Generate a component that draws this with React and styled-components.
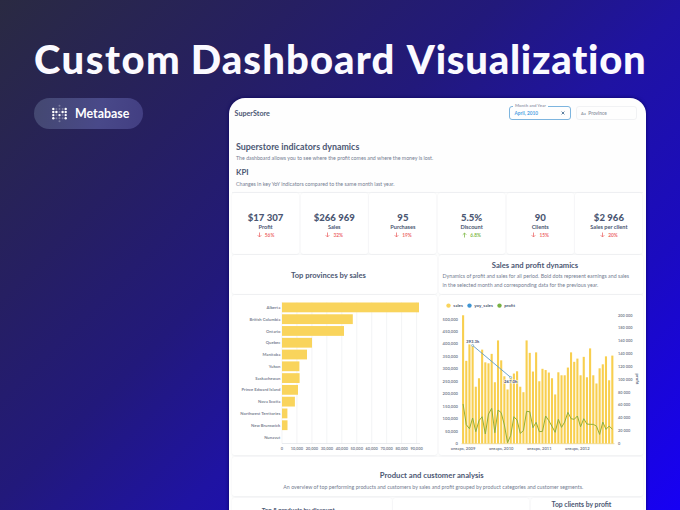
import React from 'react';
import styled, { createGlobalStyle } from 'styled-components';

const Global = createGlobalStyle`
  * { box-sizing: border-box; }
  body { margin: 0; font-family: Lato, "Open Sans", sans-serif; overflow: hidden; }
`;

const ink = '#4c5773';
const muted = '#747d91';

const Page = styled.div`
  width: 680px;
  height: 510px;
  overflow: hidden;
  background: linear-gradient(135deg, #2a2a42 0%, #261f62 25%, #22197b 42%, #1f13a2 58%, #1b0bc0 77%, #1700f4 100%);
`;
const Title = styled.h1`
  margin: 0;
  padding: 34px 0 0 34px;
  height: 97.5px;
  font-size: 40px;
  line-height: 50px;
  font-weight: 900;
  white-space: nowrap;
  color: #fbfaff;
`;
const Word = styled.span`
  letter-spacing: ${(p) => p.$track}px;
  margin-right: ${(p) => p.$after || 0}px;
`;
const Columns = styled.div`
  display: flex;
  padding-left: 34px;
`;
const Side = styled.div`
  width: 195px;
  padding-top: 0.5px;
`;
const Pill = styled.div`
  display: flex;
  align-items: center;
  gap: 7px;
  width: 109px;
  height: 31px;
  padding-left: 17px;
  border-radius: 16px;
  background: linear-gradient(100deg, #444870, #494989 60%, #423e82);
  color: #fff;
  font-size: 12.4px;
  font-weight: 700;
`;
const Board = styled.main`
  width: 417px;
  height: 413px;
  padding: 0 3.5px 0 3px;
  border-radius: 16px 16px 0 0;
  background: #fefefe;
  box-shadow: 0 0 3px 1px rgba(8, 0, 90, 0.55);
  overflow: hidden;
  color: ${ink};
`;
const TopBar = styled.header`
  display: flex;
  justify-content: space-between;
  height: 38.5px;
  padding: 8.5px 6px 0 2.6px;
`;
const Brand = styled.div`
  padding-top: 0.5px;
  font-size: 7.15px;
  line-height: 14px;
  font-weight: 700;
`;
const Filters = styled.div`
  display: flex;
  gap: 5px;
`;
const Field = styled.div`
  position: relative;
  display: flex;
  align-items: center;
  justify-content: ${(p) => (p.$active ? 'space-between' : 'flex-start')};
  gap: 2.5px;
  width: ${(p) => (p.$active ? 61.5 : 61)}px;
  height: 14px;
  padding: 0 5px 0 4.5px;
  border: 1px solid ${(p) => (p.$active ? '#7db5df' : '#f1f2f4')};
  border-radius: 3px;
  font-size: 4.75px;
  font-weight: 700;
  color: ${(p) => (p.$active ? '#509ee3' : '#9299a6')};
`;
const FieldLabel = styled.span`
  position: absolute;
  top: -4px;
  left: 3px;
  padding: 0 2px;
  background: #fefefe;
  font-size: 4.4px;
  line-height: 6px;
  color: #9aa1af;
  font-weight: 700;
  white-space: nowrap;
`;
const Abbr = styled.span`
  font-size: 4px;
`;
const Intro = styled.section`
  height: 57px;
  padding: 4px 4px 0;
  border-bottom: 1px solid #f2f3f5;
`;
const Heading = styled.h2`
  margin: 0;
  padding-right: ${(p) => p.$inset || 0}px;
  font-size: ${(p) => p.$size}px;
  line-height: 13px;
  font-weight: 700;
  white-space: nowrap;
`;
const Note = styled.p`
  margin: 0;
  padding-right: ${(p) => p.$inset || 0}px;
  font-size: 5.28px;
  line-height: ${(p) => p.$line || 10}px;
  color: ${muted};
  white-space: nowrap;
`;
const Group = styled.div`
  margin-top: 2.5px;
`;
const Grid = styled.div`
  display: grid;
  grid-template-columns: ${(p) => p.$cols};
  gap: 1.5px;
  margin-bottom: 1.5px;
`;
const Card = styled.section`
  display: flex;
  flex-direction: column;
  align-items: center;
  height: ${(p) => p.$h}px;
  padding-top: ${(p) => p.$top || 0}px;
  background: #fff;
  border-radius: 2.5px;
  box-shadow: 0 0.5px 2px rgba(70, 80, 100, 0.08);
`;
const Value = styled.div`
  font-size: 9.6px;
  line-height: 11px;
  font-weight: 900;
  white-space: nowrap;
`;
const Label = styled.div`
  font-size: 5.6px;
  line-height: 8px;
  font-weight: 700;
`;
const Trend = styled.div`
  display: flex;
  align-items: center;
  gap: 3px;
  height: 9px;
  font-size: 4.8px;
  font-weight: 700;
  color: ${(p) => (p.$up ? '#84bb4c' : '#ed6e6e')};
`;
const LeftText = styled.div`
  align-self: stretch;
  padding-left: 4px;
`;
const ChartSvg = styled.svg`
  display: block;
  align-self: stretch;
  font-family: Lato, "Open Sans", sans-serif;
  font-weight: 700;
  fill: #7d8594;
`;

const kpis = [
  ['$17 307', 'Profit', '56%'],
  ['$266 969', 'Sales', '32%'],
  ['95', 'Purchases', '19%'],
  ['5.5%', 'Discount', '6.8%', true],
  ['90', 'Clients', '15%'],
  ['$2 966', 'Sales per client', '20%'],
];

const provinces = [
  ['Alberta', 137],
  ['British Columbia', 70.8],
  ['Ontario', 62],
  ['Quebec', 30],
  ['Manitoba', 25],
  ['Yukon', 17.4],
  ['Saskachewan', 17.6],
  ['Prince Edward Island', 16],
  ['Nova Scotia', 12.9],
  ['Northwest Territories', 5.4],
  ['New Brunswick', 5.5],
  ['Nunavut', 0],
];

/* Monthly values, in thousands */
const sales = [
  515, 332, 398, 394, 228, 262, 377, 326, 322, 360, 246, 414, 334, 270, 217, 265, 281, 290, 228, 206, 414,
  364, 289, 366, 250, 300, 295, 285, 262, 197, 286, 274, 274, 305, 366, 328, 341, 274, 348, 266, 382, 274,
  241, 302, 318, 350, 254, 353,
];
const profit = [
  61.5, 29.3, 23, 39.7, 18.4, 35.5, 41.7, 14.8, 45.9, 54.7, 16.8, 52.1, 48, 28.8, 1.3, 12.7, 41.7, 36.5,
  15.8, 20, 50, 49.5, 24.6, 33, 18.4, 18.9, 42.8, 35.5, 26.7, 17.4, 37.6, 25.1, 33.4, 48.5, 38.6, 37.6,
  42.8, 26.1, 38.6, 30.3, 29.8, 29.8, 27.1, 14.1, 33.4, 22, 27.1, 22.4,
];

function Arrow({ up }) {
  return (
    <svg width="5" height="6" viewBox="0 0 5 6" fill="none" stroke="currentColor" strokeWidth="0.8">
      <path d={up ? 'M2.5 5.5V1M0.7 2.8L2.5 1L4.3 2.8' : 'M2.5 .5V5M0.7 3.2L2.5 5L4.3 3.2'} />
    </svg>
  );
}

function MetabaseMark() {
  const rows = ['..o..', '#.o.#', '##o##', '#o#o#', '#.o.#', '..o..'];
  return (
    <svg width="17" height="19" viewBox="0 0 17 19">
      {rows.map((row, y) =>
        [...row].map((c, x) =>
          c === '.' && (y === 0 || y === 5) ? null : (
            <circle
              key={`${x}-${y}`}
              cx={2.3 + x * 3.1}
              cy={1.8 + y * 3.1}
              r={c === '#' ? 1.2 : 1}
              fill="#fff"
              opacity={c === '#' ? 1 : 0.28}
            />
          )
        )
      )}
    </svg>
  );
}

function ProvinceChart() {
  return (
    <ChartSvg width="205" height="160" viewBox="232 295 205 160" fontSize="4.2">
      {Array.from({ length: 10 }, (_, i) => (
        <g key={i}>
          <path d={`M${282 + i * 14.95} 302V443.5`} stroke="#eeeff1" strokeWidth="0.7" />
          <text x={282 + i * 14.95} y="449.6" textAnchor="middle" fontSize="3.95">
            {i ? `${i}0,000` : '0'}
          </text>
        </g>
      ))}
      <path d="M282 443.5H420" stroke="#dcdfe4" strokeWidth="0.6" />
      {provinces.map(([name, w], i) => (
        <g key={name}>
          <rect x="282" y={302.5 + i * 11.78} width={w} height="9.8" fill="#f9d45c" />
          <text x="280.3" y={309 + i * 11.78} textAnchor="end">
            {name}
          </text>
        </g>
      ))}
    </ChartSvg>
  );
}

function DynamicsChart() {
  const x = (i) => 462.6 + i * 3.175;
  return (
    <ChartSvg width="204" height="160" viewBox="438.5 295 204 160" fontSize="4.15">
      {[['sales', 448, '#f9d45c'], ['yoy_sales', 469, '#3f95d3'], ['profit', 499, '#78b143']].map(([n, cx, c]) => (
        <g key={n}>
          <circle cx={cx} cy="305.6" r="2.2" fill={c} />
          <text x={cx + 4.8} y="307.1" fontSize="4.4" fill={ink}>
            {n}
          </text>
        </g>
      ))}
      {Array.from({ length: 11 }, (_, i) => (
        <g key={i}>
          <text x="457.5" y={445 - i * 12.45} textAnchor="end">
            {i ? `${i * 50},000` : '0'}
          </text>
          <text x="617.5" y={445 - i * 12.85} fontSize="3.9">
            {i ? `${i * 20} 000` : '0'}
          </text>
        </g>
      ))}
      {['2009', '2010', '2011', '2012'].map((year, i) => (
        <text key={year} x={462.6 + i * 38.1} y="449.7" textAnchor="middle">
          {`январь, ${year}`}
        </text>
      ))}
      <text transform="translate(635.2 379) rotate(90)" textAnchor="middle" fontSize="4.4" fill={ink}>
        profit
      </text>
      <path d="M461 443.7H614" stroke="#e3c56c" strokeWidth="0.6" />
      {sales.map((v, i) => (
        <rect key={i} x={x(i) - 1.05} y={443.5 - v * 0.249} width="2.1" height={v * 0.249} fill="#f8cf4f" />
      ))}
      <polyline
        points={profit.map((v, i) => `${x(i)},${443.5 - v * 0.6425}`).join(' ')}
        fill="none"
        stroke="#93ad38"
        strokeWidth="1"
      />
      <path d="M472.1 345.4L510.2 377.4" stroke="#5e9cc8" strokeWidth="0.9" />
      <circle cx="472.1" cy="345.4" r="1" fill="#fff" stroke="#5e9cc8" strokeWidth="0.6" />
      <circle cx="510.2" cy="377.4" r="1" fill="#fff" stroke="#5e9cc8" strokeWidth="0.6" />
      <g fill={ink} stroke="#fff" strokeWidth="0.9" paintOrder="stroke" textAnchor="middle" fontSize="4.3">
        <text x="472.1" y="343">393.3k</text>
        <text x="510.2" y="383.1">267.0k</text>
      </g>
    </ChartSvg>
  );
}

export default function App() {
  return (
    <Page>
      <Global />
      <Title>
        <Word $track={1.5}>Custom</Word> <Word $track={1.1} $after={2}>Dashboard</Word>{' '}
        <Word $track={0.75}>Visualization</Word>
      </Title>
      <Columns>
        <Side>
          <Pill>
            <MetabaseMark />
            Metabase
          </Pill>
        </Side>
        <Board>
          <TopBar>
            <Brand>SuperStore</Brand>
            <Filters>
              <Field $active>
                <FieldLabel>Month and Year</FieldLabel>
                <span>April, 2010</span>
                <svg width="4" height="4" viewBox="0 0 4 4" stroke="#4c7396" strokeWidth="0.9">
                  <path d="M.6 .6L3.4 3.4M3.4 .6L.6 3.4" />
                </svg>
              </Field>
              <Field>
                <Abbr>Aa</Abbr>
                <span>Province</span>
              </Field>
            </Filters>
          </TopBar>
          <Intro>
            <Heading $size={8.88}>Superstore indicators dynamics</Heading>
            <Note>The dashboard allows you to see where the profit comes and where the money is lost.</Note>
            <Group>
              <Heading $size={7.9}>KPI</Heading>
              <Note>Changes in key YoY indicators compared to the same month last year.</Note>
            </Group>
          </Intro>
          <Grid $cols="repeat(6, 1fr)">
            {kpis.map(([value, label, change, up]) => (
              <Card key={label} $h={60.5} $top={18.5}>
                <Value>{value}</Value>
                <Label>{label}</Label>
                <Trend $up={up}>
                  <Arrow up={up} />
                  {change}
                </Trend>
              </Card>
            ))}
          </Grid>
          <Grid $cols="205px 1fr">
            <Card $h={38.5} $top={13.5}>
              <Heading $size={7.6} $inset={12}>Top provinces by sales</Heading>
            </Card>
            <Card $h={38.5} $top={3.5}>
              <Heading $size={7.67} $inset={11}>Sales and profit dynamics</Heading>
              <LeftText>
                <Note $line={9}>Dynamics of profit and sales for all period. Bold dots represent earnings and sales</Note>
                <Note $line={9}>in the selected month and corresponding data for the previous year.</Note>
              </LeftText>
            </Card>
          </Grid>
          <Grid $cols="205px 1fr">
            <Card $h={160}>
              <ProvinceChart />
            </Card>
            <Card $h={160}>
              <DynamicsChart />
            </Card>
          </Grid>
          <Grid $cols="1fr">
            <Card $h={39.5} $top={12.5}>
              <Heading $size={7.68} $inset={11}>Product and customer analysis</Heading>
              <Note $inset={8}>An overview of top performing products and customers by sales and profit grouped by product categories and customer segments.</Note>
            </Card>
          </Grid>
          <Grid $cols="159.5px 136px 1fr">
            <Card $h={40} $top={5.8}>
              <Heading $size={6.1} $inset={27}>Top 5 products by discount</Heading>
            </Card>
            <Card $h={40} />
            <Card $h={40}>
              <Heading $size={6.83} $inset={10}>Top clients by profit</Heading>
            </Card>
          </Grid>
        </Board>
      </Columns>
    </Page>
  );
}
